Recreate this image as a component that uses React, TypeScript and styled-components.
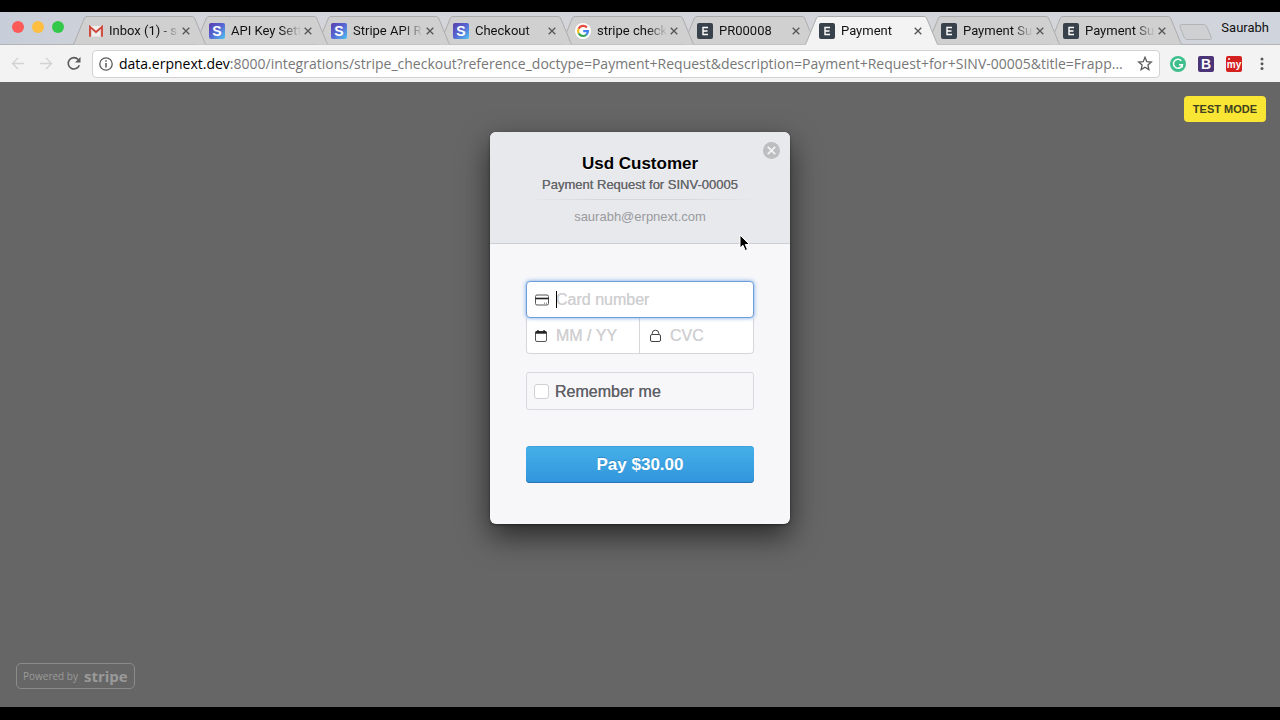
import React from 'react';
import styled, { createGlobalStyle, css } from 'styled-components';

const GlobalStyle = createGlobalStyle`
  *, *::before, *::after { box-sizing: border-box; }
  body { margin: 0; background: #000; }
  button, input { font: inherit; color: inherit; margin: 0; }
  button { border: 0; padding: 0; background: none; cursor: pointer; }
`;

const chromeFont = "Roboto, 'Liberation Sans', sans-serif";
const checkoutFont = "'Liberation Sans', Arial, sans-serif";

const Screen = styled.div`
  display: flex;
  flex-direction: column;
  min-height: 100vh;
  padding: 12px 0 13px;
  background: #000;
  font-family: ${chromeFont};
`;

/* ---------- Tab strip ---------- */

const TabStrip = styled.header`
  display: flex;
  align-items: flex-end;
  height: 33px;
  padding-left: 12px;
  background: linear-gradient(to right, #c8ced9 0, #d3d5da 200px, #d3d5da 80%, #d0d4dc 100%);
  box-shadow: inset 0 -1px 0 #b4b4b5;
`;

const WindowControls = styled.div`
  display: flex;
  flex: none;
  gap: 8px;
  width: 61px;
  height: 24px;
`;

const Light = styled.button<{ $color: string }>`
  width: 12px;
  height: 12px;
  border-radius: 50%;
  background: ${(p) => p.$color};
`;

const Tabs = styled.nav`
  display: flex;
  flex: 0 1 1110px;
  min-width: 0;
  height: 29px;
  padding-right: 12px;
`;

const TabItem = styled.div<{ $level: number }>`
  position: relative;
  z-index: ${(p) => p.$level};
  display: flex;
  align-items: center;
  flex: 0 1 134px;
  min-width: 0;
  height: 29px;
  margin-right: -12px;
  padding: 0 14px;
`;

const TabShape = styled.svg`
  position: absolute;
  inset: 0;
  width: 100%;
  height: 100%;
`;

const TabLink = styled.button`
  position: relative;
  display: flex;
  align-items: center;
  flex: 1;
  gap: 6px;
  min-width: 0;
  font-size: 13px;
  line-height: 16px;
  text-align: left;
  color: #111;
`;

const TabTitle = styled.span`
  flex: 1;
  min-width: 0;
  white-space: nowrap;
  mask-image: linear-gradient(to right, #000 calc(100% - 20px), transparent);
`;

const TabClose = styled.button`
  position: relative;
  display: grid;
  place-items: center;
  flex: none;
  width: 14px;
  height: 14px;
  color: #555;
`;

const Favicon = styled.svg`
  flex: none;
  width: 16px;
  height: 16px;
`;

const NewTab = styled.button`
  width: 34px;
  height: 16px;
  margin: 0 8px 5px -4px;
  svg { display: block; }
`;

const Profile = styled.button`
  align-self: flex-start;
  margin: 8px 11px 0 auto;
  font-size: 13px;
  line-height: 16px;
  color: #111;
`;

/* ---------- Toolbar ---------- */

const Toolbar = styled.div`
  display: flex;
  align-items: center;
  height: 37px;
  padding: 0 10px;
  background: #f3f3f3;
`;

const NavButtons = styled.div`
  display: flex;
  flex: none;
  gap: 12px;
  margin-right: 10px;
`;

const IconButton = styled.button<{ $color?: string }>`
  display: grid;
  place-items: center;
  flex: none;
  width: 16px;
  height: 16px;
  color: ${(p) => p.$color ?? '#5a5a5a'};
`;

const AddressBar = styled.div`
  display: flex;
  align-items: center;
  flex: 1;
  min-width: 0;
  height: 28px;
  padding: 0 6px 0 5px;
  border: 1px solid #d2d2d2;
  border-radius: 4px;
  background: #fff;
  font-family: 'Open Sans', sans-serif;
  font-size: 14px;
  line-height: 20px;
`;

const Host = styled.label`
  margin-left: 5px;
  color: #000;
`;

const UrlInput = styled.input`
  flex: 1;
  min-width: 0;
  height: 20px;
  padding: 0;
  border: 0;
  outline: 0;
  background: transparent;
  color: #777;
  text-overflow: ellipsis;
`;

const Extensions = styled.div`
  display: flex;
  flex: none;
  gap: 12px;
  margin-left: 10px;
`;

/* ---------- Checkout page ---------- */

const Page = styled.main`
  position: relative;
  display: flex;
  flex-direction: column;
  flex: 1;
  padding: 14px 14px 18px 16px;
  background: #666;
  font-family: ${checkoutFont};
`;

const TestMode = styled.span`
  align-self: flex-end;
  padding: 0 9px;
  border-radius: 4px;
  background: #f9e533;
  color: #40401f;
  font-size: 11px;
  font-weight: 700;
  line-height: 26px;
`;

const Modal = styled.form`
  align-self: center;
  width: 300px;
  margin: 10px 0 24px -2px;
  border-radius: 6px;
  background: #f7f7fa;
  box-shadow: 0 12px 30px rgba(0, 0, 0, 0.6), 0 1px 3px rgba(0, 0, 0, 0.4);
`;

const ModalHeader = styled.div`
  position: relative;
  display: flex;
  flex-direction: column;
  align-items: center;
  height: 112px;
  padding-top: 21px;
  border-bottom: 1px solid #cfd0d3;
  border-radius: 6px 6px 0 0;
  background: #e8e9ec;
  text-align: center;
`;

const Title = styled.h1`
  margin: 0;
  font-size: 17px;
  font-weight: 700;
  line-height: 22px;
  color: #000;
  text-shadow: 0 1px 0 #fff;
`;

const Subtitle = styled.h2`
  margin: 0;
  font-size: 13px;
  font-weight: 400;
  line-height: 20px;
  color: #66676b;
  text-shadow: 0 0 0 currentColor;
`;

const Divider = styled.hr`
  width: 230px;
  height: 1px;
  margin: 4px 0 7px;
  border: 0;
  background: linear-gradient(to right, transparent, #d6d7da 30%, #d6d7da 70%, transparent);
`;

const Email = styled.span`
  font-size: 13px;
  line-height: 20px;
  color: #999a9f;
`;

const CloseButton = styled.button`
  position: absolute;
  top: 9px;
  right: 9px;
  width: 19px;
  height: 19px;
  svg { display: block; }
`;

const ModalBody = styled.div`
  display: flex;
  flex-direction: column;
  padding: 37px 36px 41px;
`;

const CardFields = styled.div`
  display: grid;
  grid-template-columns: repeat(2, minmax(0, 1fr));
`;

const Field = styled.label<{ $focused?: boolean; $side?: 'left' | 'right' }>`
  position: relative;
  display: flex;
  align-items: center;
  gap: 6px;
  height: 36px;
  padding: 0 7px;
  background: #fff;
  border: 1px solid #d5d6d9;
  border-top: 0;
  color: #222;
  ${(p) => p.$side === 'left' && css`border-radius: 0 0 0 4px;`}
  ${(p) => p.$side === 'right' && css`border-left: 0; border-radius: 0 0 4px 0; padding-left: 8px;`}
  ${(p) => p.$focused && css`
    z-index: 1;
    grid-column: 1 / -1;
    height: 37px;
    border: 1px solid #6f9fd8;
    border-radius: 4px;
    box-shadow: 0 0 4px #6ea4e6;
  `}
`;

const FieldIcon = styled.svg`
  flex: none;
  width: 16px;
  height: 16px;
`;

const FieldInput = styled.input`
  flex: 1;
  min-width: 0;
  height: 20px;
  padding: 0;
  border: 0;
  outline: 0;
  background: transparent;
  font-family: ${checkoutFont};
  font-size: 16px;
  line-height: 20px;
  &::placeholder { color: #d0d0d2; opacity: 1; text-shadow: 0 0 0 currentColor; }
`;

const Caret = styled.span`
  position: absolute;
  top: 9px;
  left: 29px;
  width: 1px;
  height: 17px;
  background: #000;
`;

const Remember = styled.label`
  display: flex;
  align-items: center;
  gap: 6px;
  height: 38px;
  margin: 18px 0 36px;
  padding: 1px 7px 0;
  border: 1px solid #d9dadd;
  border-radius: 3px;
  color: #606066;
  font-size: 16px;
  line-height: 20px;
  text-shadow: 0 0 0 currentColor;
`;

const Checkbox = styled.input`
  appearance: none;
  width: 15px;
  height: 15px;
  border: 1px solid #cfd0d4;
  border-radius: 3px;
  background: #fff;
`;

const PayButton = styled.button`
  height: 37px;
  border-radius: 4px;
  background: linear-gradient(#45b0e9, #3195dc);
  box-shadow: inset 0 -1px 0 #2a76b5, inset 0 1px 0 #3fa0da;
  color: #fff;
  font-size: 17px;
  font-weight: 700;
  text-shadow: 0 -1px 0 rgba(0, 50, 110, 0.25);
`;

const PoweredBy = styled.a`
  display: flex;
  align-items: center;
  align-self: flex-start;
  gap: 6px;
  height: 26px;
  margin-top: auto;
  padding: 0 6px;
  border: 1px solid #8b8b8b;
  border-radius: 5px;
  color: #9a9a9a;
  font-family: 'Open Sans', sans-serif;
  font-size: 10px;
  line-height: 24px;
  text-decoration: none;
`;

const StripeMark = styled.strong`
  font-size: 15px;
  font-weight: 700;
  line-height: 22px;
`;

const Pointer = styled.svg`
  position: absolute;
  top: 152px;
  left: calc(50% + 99px);
  z-index: 2;
  width: 12px;
  height: 18px;
`;

/* ---------- Icons ---------- */

const Letter = styled.text.attrs({ x: 8, textAnchor: 'middle' })`
  font-family: ${checkoutFont};
  font-weight: 700;
  font-size: 14px;
  fill: #fff;
`;

type IconKind = 'gmail' | 'stripe' | 'google' | 'erp';

function SiteIcon({ kind }: { kind: IconKind }) {
  if (kind === 'gmail') {
    return (
      <Favicon viewBox="0 0 16 16">
        <path d="M3 3h12v10.500H3z" fill="#f1efee" />
        <path d="M4.500 13.500V6.500l4.500 4 4.500-4v7" fill="none" stroke="#dcd6d4" />
        <path d="M3 13.800V3.800L9 9l6-5.200V13.800" fill="none" stroke="#d2453a" strokeWidth="1.900" />
      </Favicon>
    );
  }
  if (kind === 'stripe') {
    return (
      <Favicon viewBox="0 0 16 16">
        <defs>
          <linearGradient id="stripeFill" x1="0" y1="0" x2="1" y2="1">
            <stop offset="0" stopColor="#5a3fae" />
            <stop offset="0.5" stopColor="#5668d3" />
            <stop offset="1" stopColor="#4fc6f2" />
          </linearGradient>
        </defs>
        <rect width="16" height="16" rx="2" fill="url(#stripeFill)" />
        <Letter y="13">S</Letter>
      </Favicon>
    );
  }
  if (kind === 'google') {
    return (
      <Favicon viewBox="0 0 16 16">
        <circle cx="8" cy="8" r="8" fill="#fff" />
        <g fill="none" strokeWidth="2.200">
          <path d="M11.900 4.500A5 5 0 0 0 3.600 5.700" stroke="#e34a3c" />
          <path d="M3.600 5.700A5 5 0 0 0 3.600 10.300" stroke="#f6bc1a" />
          <path d="M3.600 10.300A5 5 0 0 0 11.300 11.800" stroke="#3aa757" />
          <path d="M11.300 11.800A5 5 0 0 0 13 8.100H8.200" stroke="#4483ee" />
        </g>
      </Favicon>
    );
  }
  return (
    <Favicon viewBox="0 0 16 16">
      <rect width="16" height="16" rx="2" fill="#38424c" />
      <path d="M11 4.500H6v7h5M6 8h4.500" fill="none" stroke="#fff" strokeWidth="1.400" />
    </Favicon>
  );
}

const tabs: { title: string; icon: IconKind; active?: boolean }[] = [
  { title: 'Inbox (1) - s', icon: 'gmail' },
  { title: 'API Key Sett', icon: 'stripe' },
  { title: 'Stripe API R', icon: 'stripe' },
  { title: 'Checkout', icon: 'stripe' },
  { title: 'stripe check', icon: 'google' },
  { title: 'PR00008', icon: 'erp' },
  { title: 'Payment', icon: 'erp', active: true },
  { title: 'Payment Su', icon: 'erp' },
  { title: 'Payment Su', icon: 'erp' },
];

function BrowserTab({ title, icon, active, level }: { title: string; icon: IconKind; active?: boolean; level: number }) {
  return (
    <TabItem $level={level}>
      <TabShape viewBox="0 0 134 29" preserveAspectRatio="none" aria-hidden="true">
        <path
          d="M0 28.500C1 28 1 27 2 25L11 3C12 1 12.500 .5 14 .5H119C120.500 .5 121 1 122 3L131 25C132 27 132 28 133 28.500"
          fill={active ? '#f3f3f3' : '#d0d0d0'}
          stroke="#adadae"
        />
        {active && <path d="M1 28.500H132" stroke="#f3f3f3" />}
      </TabShape>
      <TabLink aria-current={active ? 'page' : undefined}>
        <SiteIcon kind={icon} />
        <TabTitle>{title}</TabTitle>
      </TabLink>
      <TabClose aria-label={`Close ${title}`}>
        <svg width="8" height="8" viewBox="0 0 8 8">
          <path d="M.7.7l6.600 6.600M7.300.7L.7 7.300" stroke="currentColor" strokeWidth="1.300" />
        </svg>
      </TabClose>
    </TabItem>
  );
}

export default function App() {
  return (
    <Screen>
      <GlobalStyle />
      <TabStrip>
        <WindowControls>
          <Light $color="#fc5b57" aria-label="Close window" />
          <Light $color="#fdbe41" aria-label="Minimize window" />
          <Light $color="#34c84a" aria-label="Zoom window" />
        </WindowControls>
        <Tabs aria-label="Tabs">
          {tabs.map((tab, i) => (
            <BrowserTab key={i} {...tab} level={tab.active ? 20 : tabs.length - i} />
          ))}
        </Tabs>
        <NewTab aria-label="New tab">
          <svg width="34" height="16" viewBox="0 0 34 16">
            <path d="M3 .5H24C26 .5 27 1 28 3L32 13C33 15 32 15.500 31 15.500H9C7 15.500 6 15 5 13L1 3C.5 1.500 1 .5 3 .5Z" fill="#cfd0d2" stroke="#b3b4b6" />
          </svg>
        </NewTab>
        <Profile>Saurabh</Profile>
      </TabStrip>

      <Toolbar>
        <NavButtons>
          <IconButton $color="#d3d3d3" aria-label="Back">
            <svg width="16" height="16" viewBox="0 0 16 16" fill="none" stroke="currentColor" strokeWidth="1.400">
              <path d="M14 7.500H2.500M8 2L2.500 7.500L8 13" />
            </svg>
          </IconButton>
          <IconButton $color="#d3d3d3" aria-label="Forward">
            <svg width="16" height="16" viewBox="0 0 16 16" fill="none" stroke="currentColor" strokeWidth="1.400">
              <path d="M2 7.500H13.500M8 2L13.500 7.500L8 13" />
            </svg>
          </IconButton>
          <IconButton aria-label="Reload">
            <svg width="16" height="16" viewBox="0 0 16 16">
              <path d="M13.300 9.200A5.700 5.700 0 1 1 12.200 3.500" fill="none" stroke="currentColor" strokeWidth="1.600" />
              <path d="M14.500 1V6.500H9Z" fill="currentColor" />
            </svg>
          </IconButton>
        </NavButtons>
        <AddressBar>
          <IconButton aria-label="Site information">
            <svg width="14" height="14" viewBox="0 0 14 14" fill="none" stroke="currentColor">
              <circle cx="7" cy="7" r="6.200" strokeWidth="1.300" />
              <path d="M7 6V10.500M7 3.300V4.800" strokeWidth="1.500" />
            </svg>
          </IconButton>
          <Host htmlFor="url">data.erpnext.dev</Host>
          <UrlInput
            id="url"
            type="text"
            defaultValue=":8000/integrations/stripe_checkout?reference_doctype=Payment+Request&description=Payment+Request+for+SINV-00005&title=Frapp..."
          />
          <IconButton aria-label="Bookmark this page">
            <svg width="16" height="16" viewBox="0 0 16 16">
              <path d="M8 1.300L9.800 5.700L14.300 6.100L10.900 9.100L11.900 13.600L8 11.200L4.100 13.600L5.100 9.100L1.700 6.100L6.200 5.700Z" fill="none" stroke="currentColor" strokeWidth="1.300" />
            </svg>
          </IconButton>
        </AddressBar>
        <Extensions>
          <IconButton aria-label="Grammar checker">
            <svg width="16" height="16" viewBox="0 0 16 16">
              <circle cx="8" cy="8" r="8" fill="#3fbf8c" />
              <path d="M11.300 4.700A4.500 4.500 0 1 0 12.400 8.700H9" fill="none" stroke="#fff" strokeWidth="1.500" />
              <path d="M12.200 8.500V11.500" stroke="#fff" strokeWidth="1.300" />
            </svg>
          </IconButton>
          <IconButton aria-label="Bootstrap">
            <svg width="16" height="16" viewBox="0 0 16 16">
              <rect width="16" height="16" rx="2" fill="#4b3577" />
              <Letter y="13">B</Letter>
            </svg>
          </IconButton>
          <IconButton aria-label="My extension">
            <svg width="16" height="16" viewBox="0 0 16 16">
              <rect width="16" height="16" rx="2" fill="#d4201f" />
              <circle cx="3" cy="3" r="1" fill="#fff" />
              <text x="8" y="12" textAnchor="middle" fontFamily="Liberation Sans, sans-serif" fontWeight="700" fontSize="10" fill="#fff">my</text>
            </svg>
          </IconButton>
          <IconButton aria-label="Menu">
            <svg width="16" height="16" viewBox="0 0 16 16" fill="currentColor">
              <circle cx="8" cy="3" r="1.500" />
              <circle cx="8" cy="7.700" r="1.500" />
              <circle cx="8" cy="12.400" r="1.500" />
            </svg>
          </IconButton>
        </Extensions>
      </Toolbar>

      <Page>
        <TestMode>TEST MODE</TestMode>
        <Modal onSubmit={(e) => e.preventDefault()}>
          <ModalHeader>
            <Title>Usd Customer</Title>
            <Subtitle>Payment Request for SINV-00005</Subtitle>
            <Divider />
            <Email>saurabh@erpnext.com</Email>
            <CloseButton type="button" aria-label="Close">
              <svg width="19" height="19" viewBox="0 0 19 19">
                <circle cx="9.500" cy="9.500" r="8.500" fill="#bdbec0" />
                <path d="M5.800 5.800L13.200 13.200M13.200 5.800L5.800 13.200" stroke="#f2f2f3" strokeWidth="1.800" />
              </svg>
            </CloseButton>
          </ModalHeader>
          <ModalBody>
            <CardFields>
              <Field $focused>
                <FieldIcon viewBox="0 0 16 16">
                  <rect x="1.500" y="3" width="13" height="10" rx="1.500" fill="none" stroke="#555" />
                  <path d="M1.500 6.500H14.500" stroke="currentColor" strokeWidth="1.600" />
                  <path d="M10.500 10.500V12M12.500 10.500V12" stroke="#888" strokeWidth=".8" />
                </FieldIcon>
                <FieldInput type="text" placeholder="Card number" aria-label="Card number" />
                <Caret />
              </Field>
              <Field $side="left">
                <FieldIcon viewBox="0 0 16 16">
                  <rect x="1.500" y="3.500" width="11" height="10" rx="1.500" fill="none" stroke="#555" />
                  <path d="M1.500 4.500H12.500" stroke="currentColor" strokeWidth="2.400" />
                  <path d="M4 2V4M10 2V4" stroke="currentColor" strokeWidth="1.400" />
                </FieldIcon>
                <FieldInput type="text" placeholder="MM / YY" aria-label="Expiry date" />
              </Field>
              <Field $side="right">
                <FieldIcon viewBox="0 0 16 16">
                  <rect x="2.500" y="6.500" width="10" height="7" rx="1.500" fill="none" stroke="#444" />
                  <path d="M4.200 6.500V5.500A3.300 3.300 0 0 1 10.800 5.500V6.500" fill="none" stroke="#444" />
                </FieldIcon>
                <FieldInput type="text" placeholder="CVC" aria-label="CVC" />
              </Field>
            </CardFields>
            <Remember>
              <Checkbox type="checkbox" />
              Remember me
            </Remember>
            <PayButton type="submit">Pay $30.00</PayButton>
          </ModalBody>
        </Modal>
        <PoweredBy href="#stripe">
          Powered by <StripeMark>stripe</StripeMark>
        </PoweredBy>
        <Pointer viewBox="0 0 12 18" aria-hidden="true">
          <path d="M1 1V14L4 11.300L6.200 16.500L8.500 15.500L6.300 10.500H10.500Z" fill="#000" stroke="#fff" />
        </Pointer>
      </Page>
    </Screen>
  );
}
